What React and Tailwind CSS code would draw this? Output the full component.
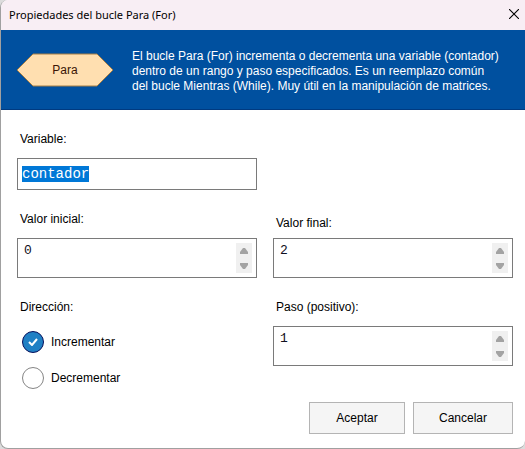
import { useEffect, useRef, useState } from "react";

function SpinField({ id, label, value, onChange, tight }) {
  return (
    <div className={`flex flex-col self-end ${tight ? "gap-[7px]" : "gap-[11px]"}`}>
      <label htmlFor={id} className="px-[3px]">{label}</label>
      <div className="flex h-10 items-start border border-[#7a7a7a] bg-white py-1 pr-1 pl-1.5">
        <input
          id={id}
          type="text"
          inputMode="numeric"
          value={value}
          onChange={(e) => onChange(Number(e.target.value) || 0)}
          className="min-w-0 flex-1 font-['Liberation_Mono',monospace] text-[13px] leading-4 text-[#101020] outline-none"
        />
        <div className="flex w-4 flex-col bg-[#f0f0f0] text-[#a3a3a3]">
          <button type="button" aria-label="Aumentar" onClick={() => onChange(value + 1)} className="flex h-[15px] items-center justify-center">
            <svg width="8" height="6" viewBox="0 0 8 6" fill="currentColor" aria-hidden="true">
              <path d="M3 0h2l3 4v2H0V4z" />
            </svg>
          </button>
          <button type="button" aria-label="Disminuir" onClick={() => onChange(value - 1)} className="flex h-[15px] items-center justify-center">
            <svg width="8" height="6" viewBox="0 0 8 6" fill="currentColor" aria-hidden="true">
              <path d="M0 0h8v2L5 6H3L0 2z" />
            </svg>
          </button>
        </div>
      </div>
    </div>
  );
}

function RadioOption({ label, checked, onSelect }) {
  return (
    <label className="flex items-center gap-[7px]">
      <span className="grid place-items-center">
        <input
          type="radio"
          name="direccion"
          checked={checked}
          onChange={onSelect}
          className="col-start-1 row-start-1 size-[22px] appearance-none rounded-full border border-[#858585] bg-white outline-none checked:border-[#08115c] checked:bg-[#2080c4]"
        />
        {checked && (
          <svg className="pointer-events-none col-start-1 row-start-1" width="10" height="8" viewBox="0 0 10 8" fill="none" stroke="white" strokeWidth="2" aria-hidden="true">
            <path d="M1 4l3 3 5-6" />
          </svg>
        )}
      </span>
      {label}
    </label>
  );
}

export default function App() {
  const variableRef = useRef(null);
  const [inicial, setInicial] = useState(0);
  const [final, setFinal] = useState(2);
  const [paso, setPaso] = useState(1);
  const [direccion, setDireccion] = useState("inc");

  useEffect(() => {
    variableRef.current.focus();
    variableRef.current.select();
  }, []);

  return (
    <div className="bg-[#dcdcdc]">
      <div className="overflow-hidden rounded-tl-lg rounded-b-lg border-b border-l border-[#a0a0a0] bg-white font-['Liberation_Sans',Arial,sans-serif] text-[12px] leading-4 text-black">
        <header className="flex h-[30px] items-center justify-between bg-[#f8eef4] pr-1.5 pl-2">
          <h1 className="font-['Noto_Sans',sans-serif] text-[11px]">Propiedades del bucle Para (For)</h1>
          <button type="button" aria-label="Cerrar" className="mb-0.5">
            <svg width="10" height="10" viewBox="0 0 10 10" stroke="black" strokeWidth="1.1" aria-hidden="true">
              <path d="M0 0l10 10M10 0L0 10" />
            </svg>
          </button>
        </header>

        <section className="flex h-20 items-center gap-[18px] border-b border-[#003a80] bg-[#00509f] pr-6 pl-[15px] text-white">
          <div className="grid shrink-0 place-items-center text-[#3a1505]">
            <svg className="col-start-1 row-start-1" width="98" height="34" viewBox="0 0 98 34" aria-hidden="true">
              <path d="M1 17L17 1h64l16 16-16 16H17z" fill="#ffdfb0" stroke="#a67f45" />
            </svg>
            <span className="col-start-1 row-start-1">Para</span>
          </div>
          <p className="pt-1 leading-[15px]">
            El bucle Para (For) incrementa o decrementa una variable (contador) dentro de un rango y paso especificados. Es un reemplazo común del bucle Mientras (While). Muy útil en la manipulación de matrices.
          </p>
        </section>

        <form onSubmit={(e) => e.preventDefault()} className="pt-[21px] pr-3 pb-[14px] pl-4">
          <div className="grid grid-cols-2 gap-x-4 gap-y-[21px]">
            <div className="col-start-1 flex flex-col gap-[11px]">
              <label htmlFor="variable" className="px-[3px]">Variable:</label>
              <input
                id="variable"
                ref={variableRef}
                type="text"
                defaultValue="contador"
                className="h-8 w-full border border-[#7a7a7a] bg-white px-1 font-['Liberation_Mono',monospace] text-[14px] leading-4 outline-none selection:bg-[#0078d7] selection:text-white"
              />
            </div>
            <div className="col-start-1 grid">
              <SpinField id="inicial" label="Valor inicial:" value={inicial} onChange={setInicial} />
            </div>
            <SpinField id="final" label="Valor final:" value={final} onChange={setFinal} tight />
            <fieldset className="px-[3px]">
              <legend className="mb-4">Dirección:</legend>
              <div className="flex flex-col gap-[14px] pl-0.5">
                <RadioOption label="Incrementar" checked={direccion === "inc"} onSelect={() => setDireccion("inc")} />
                <RadioOption label="Decrementar" checked={direccion === "dec"} onSelect={() => setDireccion("dec")} />
              </div>
            </fieldset>
            <div>
              <SpinField id="paso" label="Paso (positivo):" value={paso} onChange={setPaso} />
            </div>
          </div>
          <div className="flex justify-end gap-2 pt-[13px]">
            <button type="submit" className="h-8 w-24 border border-[#b4b4b4] bg-[#f5f5f5]">Aceptar</button>
            <button type="button" className="h-8 w-[100px] border border-[#b4b4b4] bg-[#f5f5f5]">Cancelar</button>
          </div>
        </form>
      </div>
    </div>
  );
}
